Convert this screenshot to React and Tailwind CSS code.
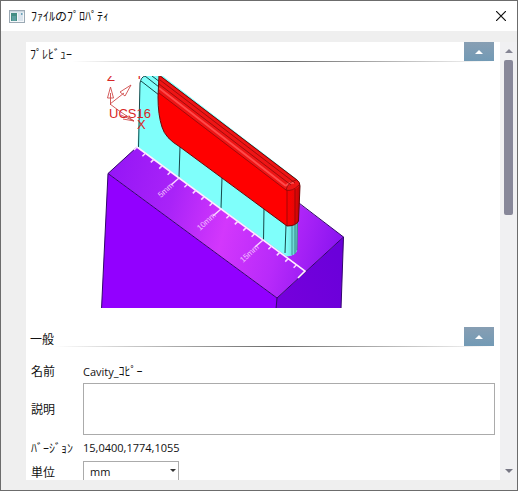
import React from "react";

const RULER_STEPS = Array.from({ length: 20 }, (_, i) => i);

function PartPreview() {
  return (
    <svg
      viewBox="100 76 245 232"
      className="ml-[74px] block h-[232px] w-[245px]"
      role="img"
      aria-label="Cavity"
    >
      <defs>
        <linearGradient id="topFace" gradientUnits="userSpaceOnUse" x1="108" y1="174" x2="343" y2="237">
          <stop offset="0" stopColor="#9516f6" />
          <stop offset="0.28" stopColor="#a923f8" />
          <stop offset="0.52" stopColor="#d337fc" />
          <stop offset="0.75" stopColor="#b82afa" />
          <stop offset="1" stopColor="#8a14f0" />
        </linearGradient>
        <linearGradient id="sideFace" gradientUnits="userSpaceOnUse" x1="277" y1="298" x2="343" y2="270">
          <stop offset="0" stopColor="#7600dc" />
          <stop offset="1" stopColor="#6b00da" />
        </linearGradient>
        <linearGradient id="insertNose" gradientUnits="userSpaceOnUse" x1="286" y1="0" x2="298" y2="0">
          <stop offset="0" stopColor="#7ffffb" />
          <stop offset="0.6" stopColor="#6fdedb" />
          <stop offset="1" stopColor="#58b5b2" />
        </linearGradient>
        <linearGradient id="redNose" gradientUnits="userSpaceOnUse" x1="286" y1="0" x2="300" y2="0">
          <stop offset="0" stopColor="#ff0000" />
          <stop offset="0.6" stopColor="#ea0505" />
          <stop offset="1" stopColor="#b80505" />
        </linearGradient>
      </defs>

      {/* block */}
      <path d="M108 173.500L277 298V309H101.500Z" fill="#9200ff" />
      <path d="M277 298L343.500 237L341 309H276Z" fill="url(#sideFace)" />
      <path d="M108 173.500L137 147L297 202L343.500 237L277 298Z" fill="url(#topFace)" />
      <path d="M101.500 309L108 173.500L137 147M108 173.500L277 298L343.500 237L341 309M277 298L276 309M299 203L343.500 237" fill="none" stroke="#32066b" strokeWidth="1" />

      {/* insert */}
      <path d="M137.500 147L140 83Q141 77 145 76H163L298 180L297 251Q293 257 286 256Z" fill="#7ffffb" />
      <path d="M286 222H298L297 251Q293 257 286 256Z" fill="url(#insertNose)" />
      <path
        d="M138.500 147L140 83Q141 77 145 76M180 147L179 177M222 178L221 208M264 208L263.500 241M286 225L285 253M141 81L159 95M145 76L159 87M152 76L160 82"
        fill="none"
        stroke="#16484a"
        strokeWidth="1"
      />
      <path d="M292 226V255M295 225V254M297.500 222L297 250" fill="none" stroke="#2f7f7d" strokeWidth="0.800" />

      {/* red cavity face */}
      <path d="M159 75L297 180Q300 182 300 186L298.500 221Q296 226 287 226L180 147Q165 138 162 127Q158 115 158 97Z" fill="#ff0000" />
      <path d="M287 189Q293 184 300 185L298.500 221Q296 226 287 226Z" fill="url(#redNose)" />
      <path d="M159 75L297 180Q300 182 299 186Q296 191 286 190L159 93Z" fill="#ee1515" />
      <path d="M159 88L286 186M286 186Q289 182 294 183" fill="none" stroke="#ff4a4a" strokeWidth="2" />
      <path
        d="M159 75L297 180Q300 182 300 186L298.500 221Q296 226 287 226L180 147Q165 138 162 127Q158 115 158 97Z"
        fill="none"
        stroke="#6b0808"
        strokeWidth="1"
      />
      <path
        d="M160 80L295 183M159 84L291 185M159 93L286 190Q292 192 299 185M286 190Q288 182 296 180M287 190V226M295 189V224"
        fill="none"
        stroke="#7d0a0a"
        strokeWidth="0.700"
      />

      {/* ruler */}
      <path d="M137 147L305 271L298 278" fill="none" stroke="#fff0ff" strokeWidth="1.600" />
      {RULER_STEPS.map((i) => {
        const x = 137 + i * 8.4;
        const y = 147 + i * 6.2;
        const major = i > 0 && i % 5 === 0;
        return (
          <line
            key={i}
            x1={x}
            y1={y}
            x2={x - (major ? 8 : 3)}
            y2={y + (major ? 7 : 3)}
            stroke="#fbd9ff"
            strokeWidth="1.500"
          />
        );
      })}
      <g fill="#f4c2ff" fontFamily="Liberation Sans, sans-serif" fontSize="8">
        <text transform="translate(161 198) rotate(-43)">5mm</text>
        <text transform="translate(200 231) rotate(-43)">10mm</text>
        <text transform="translate(243 263) rotate(-43)">15mm</text>
      </g>

      {/* coordinate system */}
      <path
        d="M110.500 105V93M107.500 98L110.500 87L113.500 98ZM110 104L124 93M120 92L131 85L125 96ZM110 104L118 110L134 121M121 115L134 121L123 119"
        fill="none"
        stroke="#cf4a4a"
        strokeWidth="0.900"
      />
      <g fill="#d72727" fontFamily="Liberation Sans, sans-serif" fontSize="13">
        <text x="107" y="81">Z</text>
        <text x="135" y="79">Y</text>
        <text x="109" y="118">UCS16</text>
        <text x="137" y="129">X</text>
      </g>
    </svg>
  );
}

function SectionHeader({ title }) {
  return (
    <header className="flex h-5 items-end pr-1.5">
      <h2 className="h-4 pl-1 leading-4">{title}</h2>
      <div className="flex flex-1 flex-col items-end">
        <button
          type="button"
          aria-label={title}
          className="flex h-[19px] w-[30px] items-center justify-center bg-linear-to-b from-[#879eb3] to-[#729ab5]"
        >
          <svg viewBox="0 0 8 4" className="h-1 w-2">
            <path d="M0 4L4 0L8 4Z" fill="white" />
          </svg>
        </button>
        <div className="h-px w-full bg-linear-to-r from-white via-[#6c6c6c] to-white" />
      </div>
    </header>
  );
}

export default function App() {
  return (
    <div className="flex h-screen flex-col border border-[#6c6c6c] bg-[#efefef] font-['Noto_Sans_CJK_JP',sans-serif] text-xs text-[#111111]">
      <header className="flex h-[30px] shrink-0 items-center bg-white px-2">
        <svg viewBox="0 0 16 13" className="mr-1.5 h-[13px] w-4">
          <rect x="0.5" y="0.5" width="15" height="12" fill="#f5f8fa" stroke="#9ba9b4" />
          <rect x="1" y="1" width="14" height="1.500" fill="#c8d5df" />
          <rect x="2" y="3" width="6" height="8" fill="#448d84" />
          <rect x="3" y="6" width="4" height="5" fill="#5d9fa0" />
          <rect x="9" y="3" width="5" height="8" fill="#dae4ed" />
          <rect x="12" y="3" width="1.500" height="2" fill="#6ea4bb" />
        </svg>
        <h1 className="flex-1">ﾌｧｲﾙのﾌﾟﾛﾊﾟﾃｨ</h1>
        <button type="button" aria-label="閉じる" className="flex size-4 items-center justify-center">
          <svg viewBox="0 0 10 10" className="size-2.5">
            <path d="M0 0L10 10M10 0L0 10" stroke="#111111" strokeWidth="1.200" />
          </svg>
        </button>
      </header>

      <div className="flex min-h-0 flex-1 pb-2.5 pl-[25px] pt-[11px]">
        <main className="min-w-0 flex-1 overflow-hidden bg-white">
          <section>
            <SectionHeader title="ﾌﾟﾚﾋﾞｭｰ" />
            <div className="pb-[19px] pt-3.5">
              <PartPreview />
            </div>
          </section>
          <section>
            <SectionHeader title="一般" />
            <div className="grid grid-cols-[52px_1fr] items-center px-[5px] pt-3.5">
              <div className="h-[22px] leading-5">名前</div>
              <div className="h-[22px] font-['Open_Sans','Noto_Sans_CJK_JP',sans-serif] text-[11px] leading-5">
                Cavity_<span className="font-['Noto_Sans_CJK_JP',sans-serif] text-xs leading-5">ｺﾋﾟｰ</span>
              </div>
              <label htmlFor="description">説明</label>
              <textarea id="description" className="block h-[52px] w-full resize-none border border-[#ababab] bg-white p-1 outline-none" />
              <div className="h-[26px] whitespace-nowrap leading-[26px]">ﾊﾞｰｼﾞｮﾝ</div>
              <div className="h-[26px] font-['Open_Sans',sans-serif] text-[11px] leading-[26px]">15,0400,1774,1055</div>
              <label htmlFor="unit">単位</label>
              <div className="relative w-24">
                <select
                  id="unit"
                  defaultValue="mm"
                  className="block h-[22px] w-full appearance-none border border-[#ababab] bg-white pl-1.5 font-['Open_Sans',sans-serif] text-[11px] outline-none"
                >
                  <option value="mm">mm</option>
                  <option value="inch">inch</option>
                </select>
                <svg viewBox="0 0 6 3" className="pointer-events-none absolute right-[3px] top-2 h-[3px] w-1.5">
                  <path d="M0 0H6L3 3Z" fill="#333333" />
                </svg>
              </div>
            </div>
          </section>
        </main>

        <div className="flex w-[17px] shrink-0 flex-col items-center justify-between bg-[#f0f0f2] py-[7px]">
          <div className="flex flex-col items-center gap-[7px]">
            <svg viewBox="0 0 8 4" className="h-1 w-2">
              <path d="M0 4L4 0L8 4Z" fill="#858594" />
            </svg>
            <div className="h-[155px] w-[9px] rounded-xs bg-[#878799]" />
          </div>
          <svg viewBox="0 0 8 4" className="h-1 w-2">
            <path d="M0 0H8L4 4Z" fill="#777784" />
          </svg>
        </div>
      </div>
    </div>
  );
}
